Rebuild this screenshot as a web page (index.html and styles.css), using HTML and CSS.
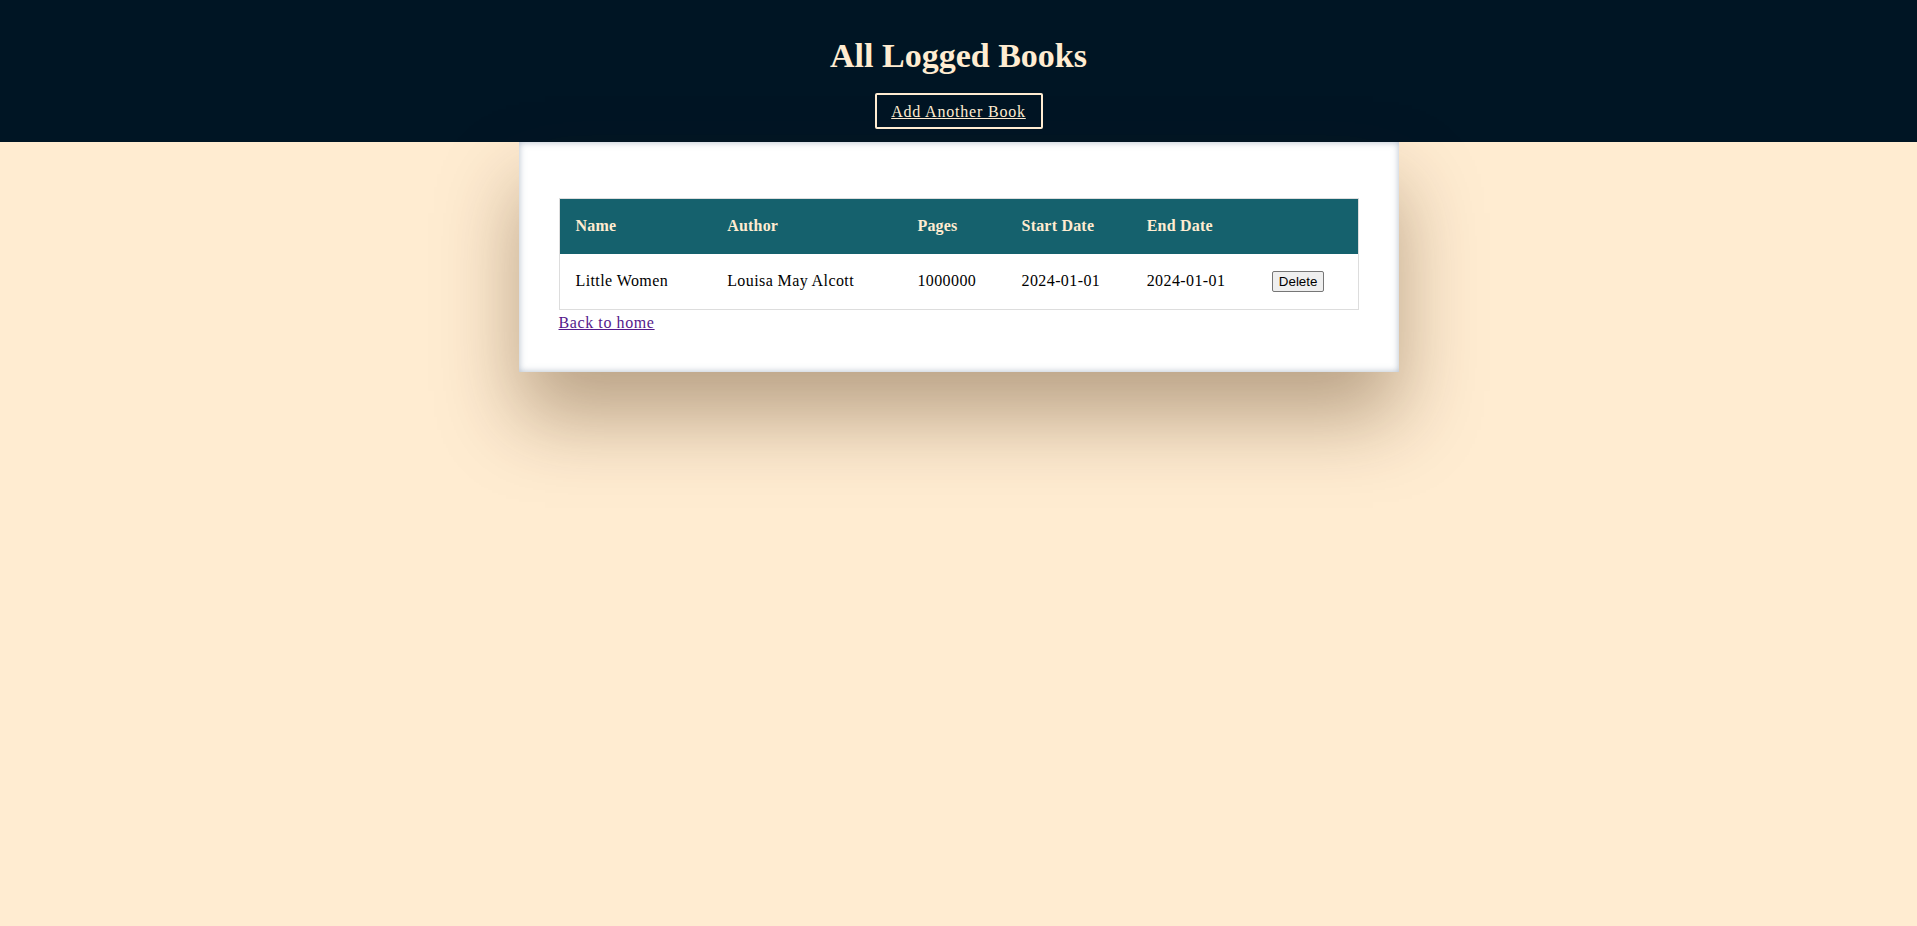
FILE: index.html
```html
<!DOCTYPE html>
<html lang="en">
<head>
<meta charset="utf-8">
<title>All Logged Books</title>
<link rel="stylesheet" href="styles.css">
</head>
<body>
<header class="top">
  <h1 class="title">All Logged Books</h1>
  <a class="add-btn" href="#">Add Another Book</a>
</header>
<main class="card">
  <table class="books">
    <colgroup>
      <col class="c-name"><col class="c-author"><col class="c-pages"><col class="c-start"><col class="c-end"><col class="c-act">
    </colgroup>
    <thead>
      <tr><th>Name</th><th>Author</th><th>Pages</th><th>Start Date</th><th>End Date</th><th></th></tr>
    </thead>
    <tbody>
      <tr><td>Little Women</td><td>Louisa May Alcott</td><td>1000000</td><td>2024-01-01</td><td>2024-01-01</td><td><button class="del" type="button">Delete</button></td></tr>
    </tbody>
  </table>
  <a class="back" href="#">Back to home</a>
</main>
</body>
</html>
```

FILE: styles.css
```css
html, body {
  margin: 0;
  padding: 0;
}
body {
  background: #ffecd1;
  font-family: "Palatino Linotype", "Book Antiqua", Palatino, "Liberation Serif", serif;
  font-size: 16px;
  color: #000;
  min-height: 100vh;
}
.top {
  background: #001524;
  height: 142px;
  box-sizing: border-box;
  display: flex;
  flex-direction: column;
  align-items: center;
  padding-top: 34px;
}
.title {
  margin: 0;
  color: #ffecd1;
  font-size: 34px;
  font-weight: bold;
  line-height: 44px;
}
.add-btn {
  margin-top: 15px;
  display: inline-block;
  border: 2px solid #ffecd1;
  border-radius: 2px;
  color: #ffecd1;
  height: 36px;
  line-height: 33px;
  box-sizing: border-box;
  width: 168px;
  text-align: center;
  font-size: 16px;
  letter-spacing: 0.8px;
}
.card {
  width: 880px;
  margin: 0 auto;
  background: #fff;
  box-sizing: border-box;
  padding: 56px 40px 36px;
  box-shadow: inset 0 0 7px rgba(110, 130, 155, 0.55), 0 45px 75px rgba(60, 30, 0, 0.36);
}
.books {
  width: 800px;
  table-layout: fixed;
  border-collapse: collapse;
  border: 1px solid #dddddd;
}
.c-name { width: 152px; }
.c-author { width: 190px; }
.c-pages { width: 104px; }
.c-start { width: 125px; }
.c-end { width: 125px; }
.c-act { width: 102px; }
.books th {
  background: #15616d;
  color: #ffecd1;
  text-align: left;
  font-weight: bold;
  height: 55px;
  padding: 0 16px;
  box-sizing: border-box;
  font-size: 16px;
  letter-spacing: 0.2px;
}
.books td {
  height: 56px;
  padding: 0 16px;
  box-sizing: border-box;
  font-size: 16px;
  letter-spacing: 0.4px;
}
.del {
  font-family: "Liberation Sans", Arial, sans-serif;
  font-size: 13.33px;
  letter-spacing: 0;
  padding: 1px 6px;
  height: 21px;
  background: #efefef;
  border: 1px solid #767676;
  border-radius: 2px;
  color: #000;
}
.back {
  display: block;
  color: #551a8b;
  text-decoration: underline;
  line-height: 26px;
  letter-spacing: 0.6px;
  width: max-content;
}
```
